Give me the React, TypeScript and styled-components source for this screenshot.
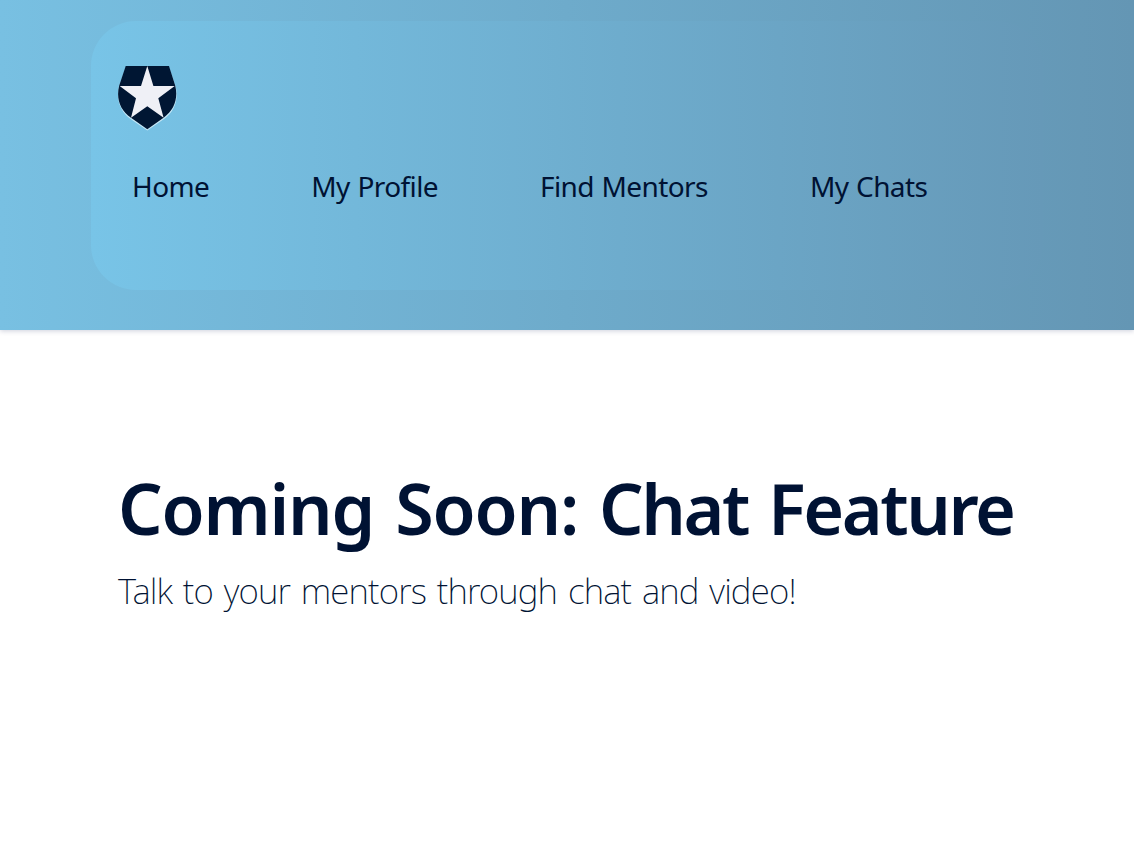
import styled, { createGlobalStyle } from "styled-components";

const links = ["Home", "My Profile", "Find Mentors", "My Chats"];

function App() {
  return (
    <>
      <GlobalStyle />
      <Header>
        <Navbar>
          <Logo viewBox="0 0 60 66">
            <path d="M7.700 2H51l6.500 19c3.500 13-1 26-11.500 33L29.300 65.500 12.600 54C2.500 47-2.500 34 1 21z" fill="#c5e7f6" />
            <path d="M7.700 1H51l6.200 19.500c3.200 13-1 25-11.600 32.200L29.300 64.300 13 52.700C2.300 45.500-2.200 33.500 1.200 20.500z" fill="#001633" />
            <path
              d="M29.300 1l6.100 20h21.300L40.300 33.300l5.300 19.400-16.300-11.400-16.300 11.400 5-19.400L1.700 21h21.300z"
              fill="#eff0f6"
            />
          </Logo>
          <Nav>
            {links.map((link) => (
              <NavLink key={link} href="#">
                {link}
              </NavLink>
            ))}
          </Nav>
        </Navbar>
      </Header>
      <Main>
        <Title>
          <Tracked $spacing={-1.2}>Coming Soon: </Tracked>
          <Tracked $spacing={-2.4}>Chat Feature</Tracked>
        </Title>
        <Lead>Talk to your mentors through chat and video!</Lead>
      </Main>
    </>
  );
}

const GlobalStyle = createGlobalStyle`
  body {
    margin: 0;
    background: #fff;
    color: #001233;
    font-family: "Noto Sans", sans-serif;
  }
`;

const Header = styled.header`
  height: 330px;
  box-sizing: border-box;
  padding: 21px 91px 0;
  background: linear-gradient(to right, #78c0e2, #6496b4);
  box-shadow: 0 1px 5px rgba(0, 18, 80, 0.2);
`;

const Navbar = styled.div`
  height: 269px;
  box-sizing: border-box;
  padding: 44px 27px 0;
  border-radius: 45px;
  background: linear-gradient(to right, #78c4e7, #6699b8);
`;

const Logo = styled.svg`
  display: block;
  width: 60px;
  height: 66px;
`;

const Nav = styled.nav`
  display: flex;
  gap: 102px;
  padding: 31px 14px;
`;

const NavLink = styled.a`
  color: #001233;
  font-size: 28px;
  font-weight: 400;
  letter-spacing: -0.6px;
  word-spacing: 1px;
  line-height: 48px;
  text-decoration: none;
  white-space: nowrap;
`;

const Main = styled.main`
  padding: 136px 118px 0;
`;

const Title = styled.h1`
  margin: 0;
  font-size: 70px;
  font-weight: 600;
  word-spacing: 4px;
  line-height: 84px;
  white-space: nowrap;
`;

const Tracked = styled.span<{ $spacing: number }>`
  letter-spacing: ${({ $spacing }) => $spacing}px;
`;

const Lead = styled.p`
  margin: 14px 0 0;
  font-size: 35px;
  font-weight: 200;
  letter-spacing: -0.85px;
  word-spacing: 2.5px;
  line-height: 53px;
  white-space: nowrap;
`;

export default App;
